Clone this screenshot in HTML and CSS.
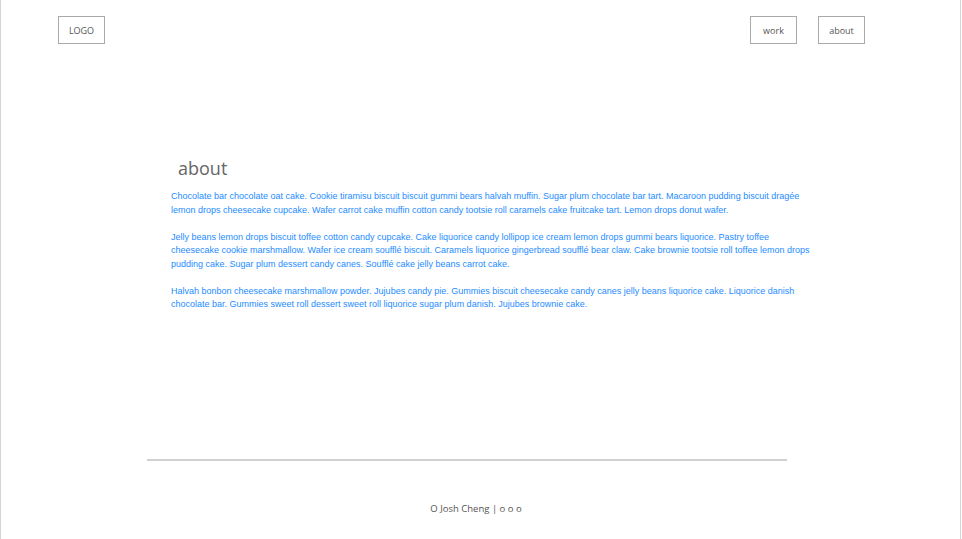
FILE: index.html
```html
<!DOCTYPE html>
<html>
<head>
<meta charset="utf-8">
<link rel="stylesheet" href="styles.css">
</head>
<body>
<div class="page">
  <header class="header">
    <div class="box logo">LOGO</div>
    <nav class="nav">
      <a class="box" href="#">work</a>
      <a class="box" href="#">about</a>
    </nav>
  </header>
  <main class="main">
    <h1 class="title">about</h1>
    <p>Chocolate bar chocolate oat cake. Cookie tiramisu biscuit biscuit gummi bears halvah muffin. Sugar plum chocolate bar tart. Macaroon pudding biscuit dragée lemon drops cheesecake cupcake. Wafer carrot cake muffin cotton candy tootsie roll caramels cake fruitcake tart. Lemon drops donut wafer.</p>
    <p>Jelly beans lemon drops biscuit toffee cotton candy cupcake. Cake liquorice candy lollipop ice cream lemon drops gummi bears liquorice. Pastry toffee cheesecake cookie marshmallow. Wafer ice cream soufflé biscuit. Caramels liquorice gingerbread soufflé bear claw. Cake brownie tootsie roll toffee lemon drops pudding cake. Sugar plum dessert candy canes. Soufflé cake jelly beans carrot cake.</p>
    <p>Halvah bonbon cheesecake marshmallow powder. Jujubes candy pie. Gummies biscuit cheesecake candy canes jelly beans liquorice cake. Liquorice danish chocolate bar. Gummies sweet roll dessert sweet roll liquorice sugar plum danish. Jujubes brownie cake.</p>
  </main>
  <footer class="footer">
    <hr class="rule">
    <p class="credit">O Josh Cheng | o o o</p>
  </footer>
</div>
</body>
</html>
```
FILE: styles.css
```css
* { box-sizing: border-box; }
html, body { margin: 0; padding: 0; background: #fff; }
.page {
  width: 961px;
  min-height: 539px;
  border-left: 1px solid #d4d4d4;
  border-right: 1px solid #d4d4d4;
  font-family: "Open Sans", "Noto Sans", sans-serif;
}
.header {
  display: flex;
  justify-content: space-between;
  align-items: flex-start;
  padding: 16px 95px 0 57px;
}
.nav { display: flex; gap: 21px; }
.box {
  display: flex;
  align-items: center;
  justify-content: center;
  width: 47px;
  height: 28px;
  border: 1px solid #aaa;
  color: #555;
  font-size: 9px;
  text-decoration: none;
}
.logo { width: 47px; }
.main {
  padding: 111px 0 0 170px;
  width: 818px;
}
.title {
  margin: 0 0 9px 7px;
  font-size: 18px;
  font-weight: 400;
  color: #666;
  line-height: 26px;
}
.main p {
  margin: 0 0 13.5px;
  font-family: "Liberation Sans", Arial, sans-serif;
  font-size: 9px;
  line-height: 13.5px;
  color: #1e8cff;
}
.footer { padding-top: 134px; }
.rule {
  margin: 0 0 0 146px;
  width: 640px;
  border: 0;
  border-top: 2px solid #d0d0d0;
}
.credit {
  margin: 41px 0 0;
  padding-right: 9px;
  text-align: center;
  font-size: 9.5px;
  color: #555;
}
```
